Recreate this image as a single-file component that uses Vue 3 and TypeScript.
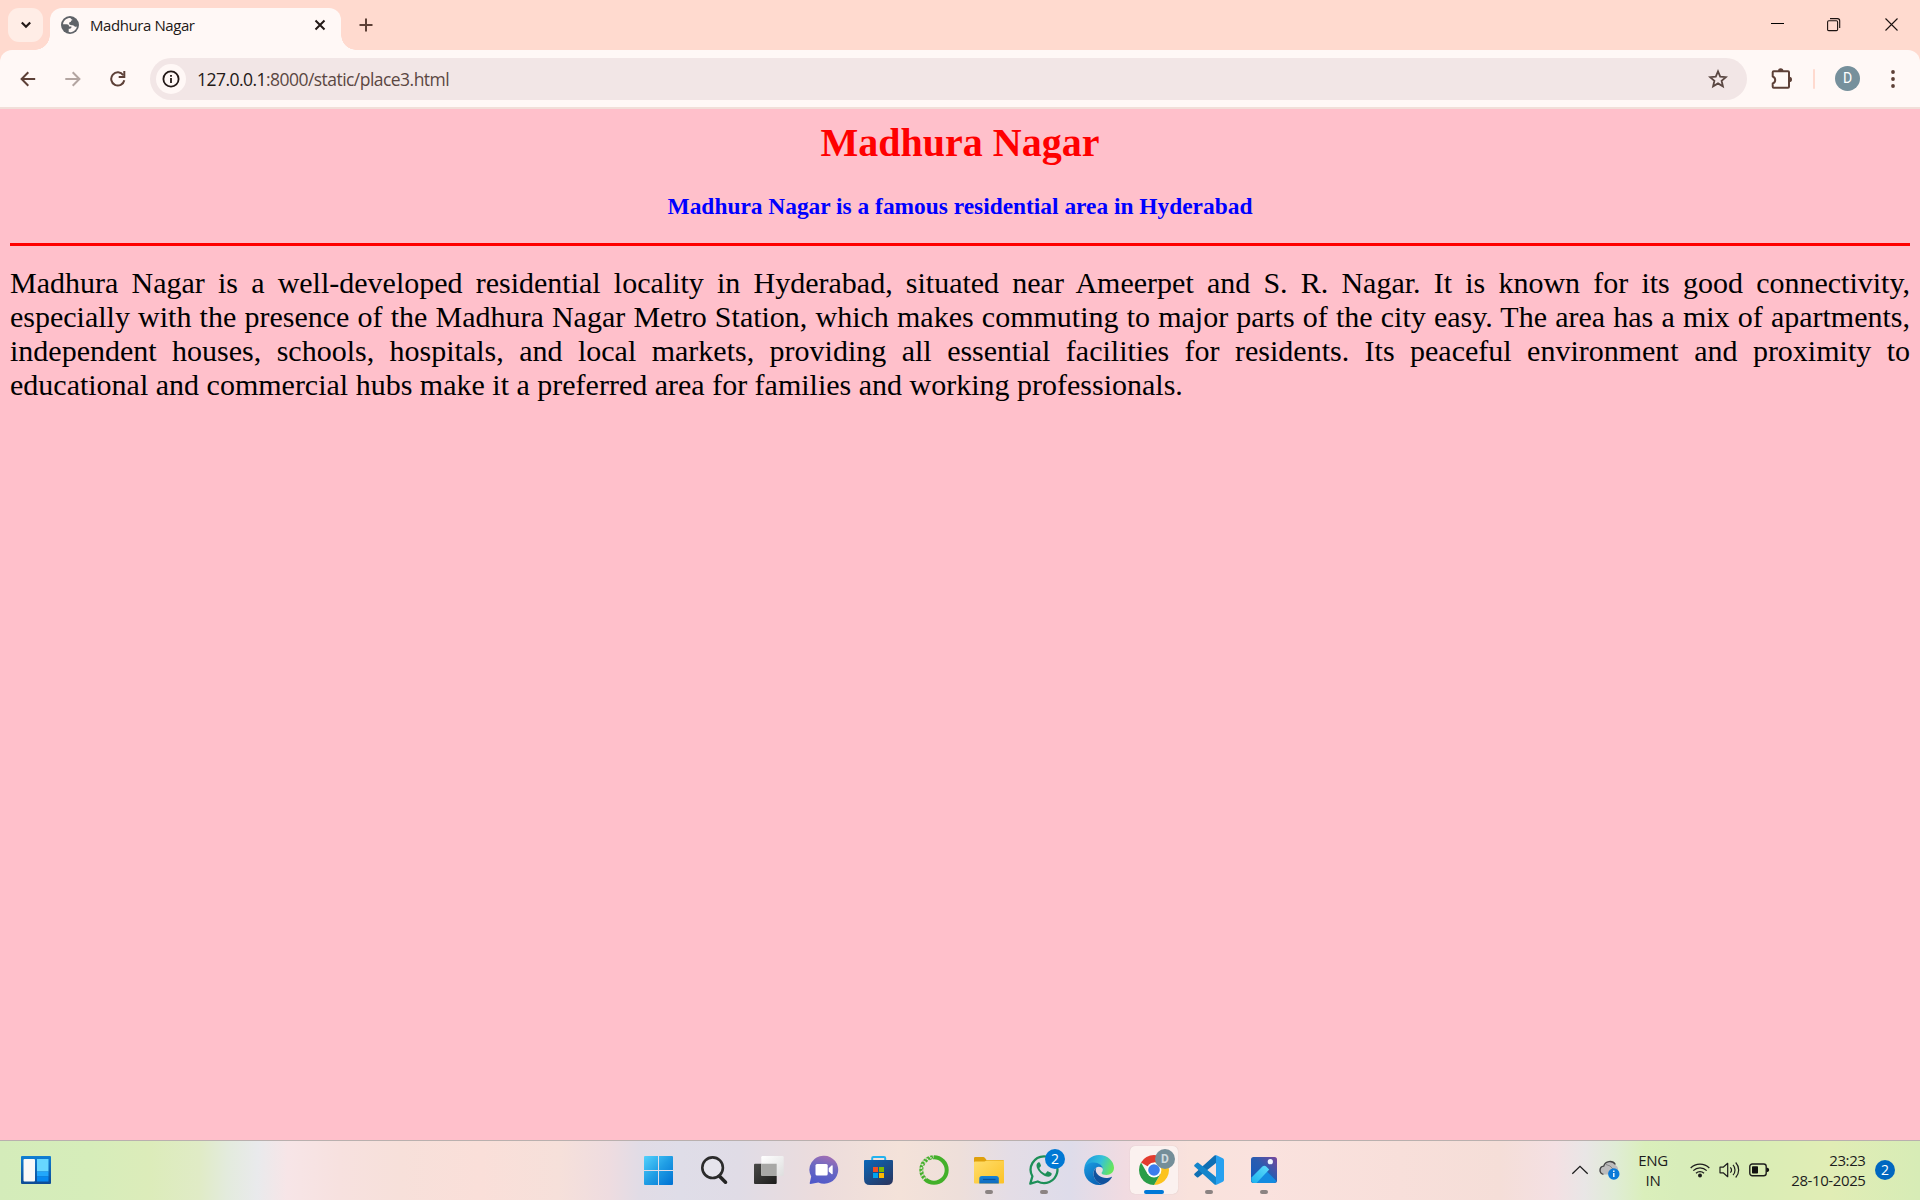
<script setup lang="ts">
interface TaskItem {
  id: string
  state?: 'open' | 'active'
}

const tasks: TaskItem[] = [
  { id: 'start' },
  { id: 'search' },
  { id: 'view' },
  { id: 'chat' },
  { id: 'store' },
  { id: 'anaconda' },
  { id: 'files', state: 'open' },
  { id: 'whatsapp', state: 'open' },
  { id: 'edge' },
  { id: 'chrome', state: 'active' },
  { id: 'code', state: 'open' },
  { id: 'photos', state: 'open' },
]
</script>

<template>
  <div class="screen">
    <header class="tabstrip">
      <button class="tab-search" aria-label="Search tabs">
        <svg width="12" height="8" viewBox="0 0 12 8"><path d="M1.8 1.5 6 5.7l4.200-4.200" fill="none" stroke="#231917" stroke-width="2.200" /></svg>
      </button>
      <div class="tab">
        <svg class="favicon" width="18" height="18" viewBox="0 0 18 18">
          <circle cx="9" cy="9" r="9" fill="#5f6368" />
          <path d="M9.300 1.900c-3.900 0-7 2.700-7.300 6.300h3.600c1.700 0 2.400.9 2.400 2.200h2.400c.3 1.900-.9 2.300-2.700 2.300v3.300c.9.200 2.200.2 3.100-.1 2.600-.8 4.600-2.800 5.200-5.500-.8.700-1.900.6-2.600-.2-.6-.8-1.500-1-2.500-1-1.700 0-2.800-.5-2.800-1.700 0-1 .8-1.600 1.800-1.700.1-1.100.7-1.700 1.800-1.800-.9-.3-1.600-1.100-2.400-2.100z" fill="#fff8f6" />
        </svg>
        <span class="tab-title">Madhura Nagar</span>
        <svg class="tab-close" width="12" height="12" viewBox="0 0 12 12"><path d="m1.500 1.500 9 9m0-9-9 9" stroke="#231917" stroke-width="2" fill="none" /></svg>
      </div>
      <svg class="new-tab" width="14" height="14" viewBox="0 0 14 14"><path d="M7 .5v13M.5 7h13" stroke="#5d4037" stroke-width="2" fill="none" /></svg>
      <div class="window-controls">
        <svg width="14" height="14" viewBox="0 0 14 14"><path d="M0 5.500h13" stroke="#000" stroke-width="1" /></svg>
        <svg class="restore" width="14" height="14" viewBox="0 0 14 14"><path d="M.6 4q0-1.200 1.200-1.200h7.600q1.200 0 1.200 1.200v7.400q0 1.200-1.200 1.200H1.800Q.6 12.600.6 11.400zM3 .6h7.500q2.200 0 2.200 2.200V10" stroke="#1c1210" stroke-width="1.100" fill="none" /></svg>
        <svg width="14" height="14" viewBox="0 0 14 14"><path d="m.5.500 12 12m0-12-12 12" stroke="#1c1210" stroke-width="1.100" /></svg>
      </div>
    </header>

    <div class="toolbar-wrap">
      <nav class="toolbar">
        <div class="nav-buttons">
          <svg width="16" height="16" viewBox="0 0 16 16"><path d="M15.200 8H2M8.300 1.300 1.600 8l6.700 6.700" fill="none" stroke="#5d4037" stroke-width="2" /></svg>
          <svg width="16" height="16" viewBox="0 0 16 16"><path d="M.3 8H14M7.700 1.300 14.400 8l-6.700 6.700" fill="none" stroke="#b3a5a1" stroke-width="2" /></svg>
          <svg width="16" height="16" viewBox="0 0 16 16"><path d="M14.300 9.200A6.600 6.600 0 1 1 13.300 4.200" fill="none" stroke="#5d4037" stroke-width="2" /><path d="M14.300 0v6.100H8.700" fill="none" stroke="#5d4037" stroke-width="2" /></svg>
        </div>
        <div class="address">
          <span class="site-info">
            <svg width="18" height="18" viewBox="0 0 18 18"><circle cx="9" cy="9" r="7.600" fill="none" stroke="#231917" stroke-width="1.800" /><path d="M9 8v5M9 5v1.800" stroke="#231917" stroke-width="1.800" /></svg>
          </span>
          <span class="url"><b>127.0.0.1</b>:8000/static/place3.html</span>
          <svg class="star" width="20" height="20" viewBox="0 0 20 20"><path d="m10 2.400 2.200 5.200 5.700.5-4.300 3.700 1.300 5.500-4.900-2.900-4.900 2.900 1.300-5.500-4.300-3.700 5.700-.5z" fill="none" stroke="#5a4742" stroke-width="1.800" /></svg>
        </div>
        <svg class="puzzle" width="23" height="22" viewBox="0 0 23 22">
          <path d="M3.700 3.300H18q1 0 1 1V18.700q0 1-1 1H3.700q-1 0-1-1V15.500a3.700 3.700 0 0 0 0-7V4.300q0-1 1-1z" fill="none" stroke="#5d4037" stroke-width="2" stroke-linejoin="round" />
          <path d="M8 3a2.700 2.700 0 0 1 5.400 0zM19.300 8.700a2.700 2.700 0 0 1 0 5.400z" fill="#5d4037" />
        </svg>
        <span class="divider"></span>
        <span class="avatar">D</span>
        <svg class="menu" width="4" height="18" viewBox="0 0 4 18"><g fill="#5d4037"><circle cx="2" cy="2" r="1.900" /><circle cx="2" cy="9" r="1.900" /><circle cx="2" cy="16" r="1.900" /></g></svg>
      </nav>
    </div>

    <main class="page">
      <h1>Madhura Nagar</h1>
      <h3>Madhura Nagar is a famous residential area in Hyderabad</h3>
      <hr />
      <p>
        Madhura Nagar is a well-developed residential locality in Hyderabad, situated near Ameerpet and S. R. Nagar. It is known for its good connectivity, especially with the presence of the Madhura Nagar Metro Station, which makes commuting to major parts of the city easy. The area has a mix of apartments, independent houses, schools, hospitals, and local markets, providing all essential facilities for residents. Its peaceful environment and proximity to educational and commercial hubs make it a preferred area for families and working professionals.
      </p>
    </main>

    <footer class="taskbar">
      <svg class="widgets" width="30" height="28" viewBox="0 0 30 28">
        <defs><linearGradient id="wg" x1="0" y1="0" x2="0" y2="1"><stop offset="0" stop-color="#0f7fd4" /><stop offset="1" stop-color="#0c4b96" /></linearGradient></defs>
        <rect width="30" height="28" rx="1" fill="url(#wg)" />
        <rect x="2.500" y="3" width="11.500" height="22.500" rx="1" fill="#f8f8f8" />
        <rect x="16" y="3" width="11.500" height="12.500" fill="#67d6ff" />
        <rect x="16" y="15.500" width="11.500" height="5" fill="#22a7fb" />
        <rect x="16" y="20.500" width="11.500" height="5" fill="#0788ef" />
      </svg>

      <div class="apps">
        <div v-for="t in tasks" :key="t.id" class="app" :class="[t.state, t.id]">
          <svg v-if="t.id === 'start'" width="30" height="30" viewBox="0.5 -0.5 30 30">
            <defs><linearGradient id="st" gradientUnits="userSpaceOnUse" x1="0" y1="0" x2="29" y2="29"><stop offset="0" stop-color="#54d3fd" /><stop offset=".5" stop-color="#219fe5" /><stop offset="1" stop-color="#0072d3" /></linearGradient></defs>
            <path d="M1.500.5H14.500v14H.5v-13q0-1 1-1zM15.500.5h13q1 0 1 1v13H15.500zM.5 15.500H14.500v14H1.500q-1 0-1-1zM15.500 15.500h14v13q0 1-1 1H15.500z" fill="url(#st)" />
          </svg>
          <svg v-else-if="t.id === 'search'" width="30" height="30" viewBox="0 0 30 30">
            <path d="m20.300 21 6.200 6.200" stroke="#242424" stroke-width="3.600" stroke-linecap="round" />
            <circle cx="13.600" cy="12.700" r="10.300" fill="#ebebf2" fill-opacity=".5" stroke="#2b2b2b" stroke-width="2.600" />
          </svg>
          <svg v-else-if="t.id === 'view'" width="30" height="30" viewBox="0 0 30 30">
            <defs><linearGradient id="tv" x1="0" y1="0" x2="1" y2="1"><stop offset="0" stop-color="#4a4a48" /><stop offset="1" stop-color="#1c1c1b" /></linearGradient><linearGradient id="tw" x1="0" y1="0" x2="1" y2="1"><stop offset="0" stop-color="#fff" /><stop offset="1" stop-color="#dedede" /></linearGradient></defs>
            <rect x="0" y="8.700" width="22.700" height="20.300" rx="1" fill="url(#tv)" />
            <rect x="7.300" y="1" width="22.400" height="20" rx="1.200" fill="url(#tw)" />
            <path d="M7.300 8.700h15.400V21H8.300q-1 0-1-1z" fill="#a8a8a6" />
          </svg>
          <svg v-else-if="t.id === 'chat'" width="30" height="30" viewBox="0 0 30 30">
            <defs><linearGradient id="ch" x1=".7" y1="0" x2=".4" y2="1"><stop offset="0" stop-color="#a46fb4" /><stop offset=".45" stop-color="#6a68c2" /><stop offset="1" stop-color="#5059c9" /></linearGradient></defs>
            <path d="M15.300.8a14 14 0 1 1-6 26.700L1.500 29q-1 0-.8-1l1.500-6.500A14 14 0 0 1 15.300.8z" fill="url(#ch)" />
            <rect x="6.500" y="9" width="12.200" height="11.500" rx="1.500" fill="#fff" />
            <path d="M19.700 13.200 22.500 10.500q1.200-.7 1.200.6v7.500q0 1.200-1.200.5l-2.800-2.600z" fill="#fff" />
          </svg>
          <svg v-else-if="t.id === 'store'" width="30" height="30" viewBox="0 0 30 30">
            <defs><linearGradient id="so" x1="0" y1="0" x2=".8" y2="1"><stop offset="0" stop-color="#0967b9" /><stop offset="1" stop-color="#283863" /></linearGradient></defs>
            <path d="M8.200 6V3.100q0-1.200 1.200-1.200h10.600q1.200 0 1.200 1.200V6" fill="none" stroke="#22b2ee" stroke-width="2" />
            <path d="M0 6q0-1 1-1h27q1 0 1 1v18q0 6-6 6h-17q-6 0-6-6z" fill="url(#so)" />
            <path d="M9 12h5v5h-5z" fill="#f25022" /><path d="M15 12h5v5h-5z" fill="#7fba00" /><path d="M9 18h5v5h-5z" fill="#00a4ef" /><path d="M15 18h5v5h-5z" fill="#ffb900" />
          </svg>
          <svg v-else-if="t.id === 'anaconda'" width="30" height="30" viewBox="0 0 30 30">
            <circle cx="15" cy="15" r="12.700" fill="none" stroke="#43b02a" stroke-width="4" />
            <g fill="none" stroke="#ecdfd8" stroke-width="1.300">
              <path d="M15 .9A14.100 14.100 0 0 0 6.300 26.100" stroke-dasharray="1.500 2.400" />
              <path d="M15 2.500A12.500 12.500 0 0 0 7.200 24.800" stroke-dasharray="1.700 1.900" stroke-dashoffset="1.200" />
              <path d="M14 4.100A10.900 10.900 0 0 0 8 23.400" stroke-dasharray="1.800 2.200" stroke-dashoffset=".4" />
            </g>
          </svg>
          <svg v-else-if="t.id === 'files'" width="30" height="30" viewBox="0 0 30 30">
            <defs><linearGradient id="fi" x1="0" y1="0" x2="1" y2="1"><stop offset="0" stop-color="#ffdd6b" /><stop offset="1" stop-color="#fcc226" /></linearGradient><linearGradient id="fj" x1="0" y1="0" x2="0" y2="1"><stop offset="0" stop-color="#1683d8" /><stop offset="1" stop-color="#0f6abd" /></linearGradient></defs>
            <path d="M0 3.200Q0 2 1.200 2h8q1 0 1.800 1l1.500 2h16.200Q30 5 30 6.300V12H0z" fill="#dfa00c" />
            <path d="M0 7.500q0-1 1-1h9.500l2.200-1H30v22.200Q30 28.500 29 28.500H1q-1 0-1-1z" fill="url(#fi)" />
            <path d="M5.300 28.500v-5q0-2.500 2.500-2.500h14.500q2.500 0 2.500 2.500v5z" fill="url(#fj)" /><path d="M9 24.500h12.500" stroke="#0a529b" stroke-width="1.200" />
          </svg>
          <svg v-else-if="t.id === 'whatsapp'" width="30" height="30" viewBox="0 0 30 30">
            <path d="M15.200 1.300A13.400 13.400 0 1 1 8.700 26.500L1.300 28.600 3.400 21.300A13.400 13.400 0 0 1 15.200 1.300z" fill="none" stroke="#1d8f58" stroke-width="2.300" stroke-linejoin="round" />
            <path d="M10 7.300c-.9-.2-2.500 1.300-2.500 3.300 0 2.900 2.600 6.200 5 8.200 2.200 1.800 4.600 2.900 6.800 2.900 2 0 3.400-1.400 3.400-3 0-.5-.2-.8-.7-1l-2.700-1.300c-.6-.3-.9-.1-1.300.3l-1.200 1.500c-.4.400-.7.400-1.200.2-2.200-1-4-2.600-5-4.700-.2-.5-.2-.7.100-1.100l1.100-1.400c.2-.3.200-.6.100-1L11 8q-.3-.7-1-.7z" fill="#1d8f58" />
          </svg>
          <svg v-else-if="t.id === 'edge'" width="30" height="30" viewBox="0 0 30 30">
            <defs>
              <linearGradient id="e1" x1="0" y1=".2" x2="1" y2=".5"><stop offset="0" stop-color="#1a97e0" /><stop offset=".55" stop-color="#35c1d9" /><stop offset="1" stop-color="#68e65a" /></linearGradient>
              <linearGradient id="e2" x1="0" y1="0" x2=".6" y2="1"><stop offset="0" stop-color="#1b9de2" /><stop offset="1" stop-color="#0a63b5" /></linearGradient>
            </defs>
            <path d="M.3 13.500C1 5.500 7.300 0 15 0c8.800 0 15 6.300 15 12.800 0 4.500-3.500 7.200-7.500 7.200-3 0-5-.9-5-2 0-.7 1.300-1.300 1.300-3.600 0-3.200-3-6.200-8-6.200-5.300 0-9 2.700-10.500 5.300z" fill="url(#e1)" />
            <path d="M.1 15C.5 10 5 7.400 9.500 7.400c5.700 0 9.300 3.100 9.300 6.500-.6-1.300-2-2.200-4-2.200-3 0-5.300 3.300-5.300 7 0 5.300 4.200 9.700 9.300 10.800-1.200.4-2.500.5-3.800.5-8.500 0-15-7-14.900-15z" fill="url(#e2)" />
            <path d="M12.600 12.400c-1.700 1.100-3.100 3.500-3.100 6.300 0 5.300 4.200 9.800 9.400 10.800 3.900-1.100 7.100-3.700 8.900-6.900.3-.6-.1-1-.7-.7-1.300.7-3 1.200-5 1.200-5.500 0-10.400-3.900-10.400-8 0-1 .3-2 .9-2.700z" fill="#10529e" />
          </svg>
          <svg v-else-if="t.id === 'chrome'" width="30" height="30" viewBox="0 0 30 30">
            <path d="M15 15 2.010 7.500A15 15 0 0 1 27.990 7.500H15z" fill="#e33b2e" />
            <path d="M15 7.500h12.990A15 15 0 0 1 15 30l6.500-11.250z" fill="#fcc31e" />
            <path d="M2.010 7.500A15 15 0 0 0 15 30l6.500-11.250L8.500 18.750z" fill="#2a9d48" />
            <circle cx="15" cy="15" r="7.400" fill="#fff" /><circle cx="15" cy="15" r="5.800" fill="#3b7ded" />
          </svg>
          <svg v-else-if="t.id === 'code'" width="30" height="30" viewBox="0 0 30 30">
            <path d="M22 .3v7.800L4.300 22.300q-.7.500-1.400 0L.6 20.200q-.9-.9 0-1.700L20.500.6q.7-.6 1.500-.3z" fill="#0f6fb4" />
            <path d="M22 29.700v-7.800L4.300 7.700q-.7-.5-1.400 0L.6 9.800q-.9.900 0 1.700L20.500 29.400q.7.600 1.500.3z" fill="#1485cb" />
            <path d="M21.300 29.700q.6-.3.700-1.200V1.500Q21.900.6 21.300.3q.5-.3 1.200 0l6.300 3q1.200.6 1.200 1.900v19.600q0 1.300-1.200 1.900l-6.300 3q-.7.300-1.200 0z" fill="#27a1f0" />
          </svg>
          <svg v-else width="26" height="26" viewBox="0 0 26 26">
            <defs><linearGradient id="p1" x1="0" y1="1" x2="1" y2="0"><stop offset="0" stop-color="#105bc0" /><stop offset=".55" stop-color="#2b5cb0" /><stop offset="1" stop-color="#7a469b" /></linearGradient><linearGradient id="p2" x1="0" y1="1" x2="1" y2="0"><stop offset="0" stop-color="#1bb3ee" /><stop offset="1" stop-color="#60dcfb" /></linearGradient></defs>
            <rect width="26" height="26" rx="2.500" fill="url(#p1)" />
            <path d="M1 24.500 12 13.300q1.300-1.300 2.600 0L25.500 24q-.8 2-2.500 2H3q-1.600 0-2-1.500z" fill="#148be0" />
            <path d="m.5 20.500 10.900-11q2-1.600 3.800 0l3 3L5.500 26H2.800Q.5 26 .3 23.600z" fill="url(#p2)" />
            <circle cx="19.300" cy="4.700" r="2.600" fill="#eff6ff" />
          </svg>
          <span v-if="t.id === 'whatsapp'" class="badge blue">2</span>
          <span v-if="t.id === 'chrome'" class="badge gray">D</span>
          <i v-if="t.state" class="indicator"></i>
        </div>
      </div>

      <div class="tray">
        <svg class="chevron" width="18" height="10" viewBox="0 0 18 10"><path d="m1.300 8.800 7.700-7.500 7.700 7.500" fill="none" stroke="#1d1d1d" stroke-width="1.300" /></svg>
        <svg class="cloud" width="21" height="20" viewBox="0 0 21 20">
          <path d="M4.200 14.500A4.200 4.200 0 0 1 4.600 6 6.500 6.500 0 0 1 16.500 5a4.500 4.500 0 0 1 2.500 3.500v6z" fill="#bcbcbc" />
          <path d="M4.400 14.300A4.100 4.100 0 0 1 4.700 6.200 6.500 6.500 0 0 1 16.400 4.500" fill="none" stroke="#444" stroke-width="1.300" />
          <path d="M7 4.500q4 .2 8 5.500" fill="none" stroke="#858585" stroke-width="1" />
          <circle cx="14.800" cy="14" r="5.700" fill="#0a7ad8" /><path d="M14.800 13.100v4M14.800 10.500v1.500" stroke="#fff" stroke-width="1.400" />
        </svg>
        <div class="language"><span>ENG</span><span>IN</span></div>
        <svg class="wifi" width="20" height="16" viewBox="0 0 20 16"><g fill="none" stroke="#1d1d1d" stroke-width="1.300"><path d="M.7 6a13 13 0 0 1 18.600 0M3.300 8.600a9.400 9.400 0 0 1 13.400 0M6 11.200a5.800 5.800 0 0 1 8 0" /></g><circle cx="10" cy="13.500" r="2" fill="#1d1d1d" /></svg>
        <svg class="sound" width="21" height="18" viewBox="0 0 21 18"><g fill="none" stroke="#1d1d1d" stroke-width="1.200"><path d="M1 6.200h3.200L8.700 2.300v13.400L4.200 11.800H1z" stroke-linejoin="round" /><path d="M11.300 6.300a4 4 0 0 1 0 5.400M14 3.900a7.500 7.500 0 0 1 0 10.200M16.700 1.500a11 11 0 0 1 0 15" /></g></svg>
        <svg class="battery" width="21" height="14" viewBox="0 0 21 14"><rect x=".8" y="1" width="16.400" height="11.800" rx="2.500" fill="none" stroke="#1d1d1d" stroke-width="1.400" /><rect x="3" y="3.200" width="6" height="7.400" rx=".8" fill="#111" /><path d="M17.500 4.800h1q1.700.6 1.700 2.100T18.500 9h-1z" fill="#111" /></svg>
        <div class="clock"><span>23:23</span><span>28-10-2025</span></div>
        <span class="notices">2</span>
      </div>
    </footer>
  </div>
</template>

<style>
body {
  overflow: hidden;
}
</style>

<style scoped>
.screen {
  width: 1920px;
  height: 1200px;
  display: flex;
  flex-direction: column;
  overflow: hidden;
  background: #ffdacf;
  font-family: "Open Sans", "Noto Sans", sans-serif;
}
svg {
  display: block;
  flex: none;
}
.tabstrip {
  height: 50px;
  flex: none;
  display: flex;
  align-items: flex-start;
  padding-left: 8px;
}
.tab-search {
  width: 35px;
  height: 34px;
  margin: 8px 7px 0 0;
  padding: 0;
  border: 0;
  border-radius: 11px;
  background: #ffede6;
  display: flex;
  align-items: center;
  justify-content: center;
}
.tab {
  position: relative;
  width: 291px;
  height: 42px;
  margin-top: 8px;
  box-sizing: border-box;
  padding: 0 15px 8px 11px;
  border-radius: 12px 12px 0 0;
  background: #fff8f6;
  display: flex;
  align-items: center;
}
.tab::before,
.tab::after {
  content: "";
  position: absolute;
  bottom: 0;
  width: 15px;
  height: 15px;
}
.tab::before {
  right: 100%;
  background: radial-gradient(circle at 0 0, transparent 14.500px, #fff8f6 15px);
}
.tab::after {
  left: 100%;
  background: radial-gradient(circle at 100% 0, transparent 14.500px, #fff8f6 15px);
}
.tab-title {
  margin-left: 11px;
  font-size: 15px;
  letter-spacing: -0.42px;
  color: #231917;
  white-space: nowrap;
}
.tab-close {
  margin-left: auto;
}
.new-tab {
  margin: 18px 0 0 18px;
}
.window-controls {
  margin: 18px 21px 0 auto;
  display: flex;
  gap: 43px;
}
.restore {
  margin: 0 1px 0 -1px;
}
.toolbar-wrap {
  flex: none;
  height: 59px;
}
.toolbar {
  height: 57px;
  border-bottom: 2px solid #f1dfd9;
  border-radius: 12px 12px 0 0;
  background: #fff8f6;
  display: flex;
  align-items: center;
  padding-left: 20px;
}
.nav-buttons {
  width: 130px;
  display: flex;
  gap: 29px;
}
.address {
  width: 1597px;
  height: 42px;
  box-sizing: border-box;
  padding: 0 19px 0 6px;
  margin-top: 1px;
  border-radius: 21px;
  background: #f2e6e6;
  display: flex;
  align-items: center;
}
.site-info {
  width: 30px;
  height: 30px;
  border-radius: 50%;
  background: #fff8f6;
  display: flex;
  align-items: center;
  justify-content: center;
}
.url {
  margin-left: 11px;
  font-size: 17.500px;
  letter-spacing: -0.54px;
  color: #5b4742;
  white-space: nowrap;
}
.url b {
  font-weight: 400;
  color: #231917;
}
.star {
  margin-left: auto;
}
.puzzle {
  margin-left: 23px;
}
.divider {
  width: 2px;
  height: 20px;
  margin-left: 20px;
  border-radius: 1px;
  background: #ffdacf;
}
.avatar {
  width: 25px;
  height: 25px;
  margin-left: 20px;
  border-radius: 50%;
  background: #76909c;
  color: #fff;
  font: 14px/25px Roboto, sans-serif;
  text-align: center;
}
.menu {
  margin-left: 30.500px;
}
.page {
  flex: 1;
  padding: 11px 10px 0;
  background: #ffc0cb;
  font-family: "Liberation Serif", "Times New Roman", serif;
  color: #000;
}
h1 {
  margin: 0;
  font-size: 40px;
  line-height: 46px;
  text-align: center;
  color: #f00;
}
h3 {
  margin: 26px 0 23px;
  font-size: 23.400px;
  line-height: 28px;
  text-align: center;
  color: #00f;
}
hr {
  height: 3px;
  margin: 0 0 20px;
  border: 0;
  background: #f00;
}
p {
  margin: 0;
  font-size: 30px;
  line-height: 34px;
  text-align: justify;
}
.taskbar {
  position: relative;
  flex: none;
  height: 58px;
  padding-bottom: 1px;
  border-top: 1px solid #b9b0ae;
  display: flex;
  align-items: center;
  background: linear-gradient(91deg, #d4ecba 0, #d6edba 90px, #dcecba 150px, #e0ebc6 200px, #e3ebdd 228px, #e9eaec 258px, #f7e5e7 288px, #f7e1df 340px, #f7e0da 400px, #fadfd9 480px, #f6e0da 560px, #eedce0 610px, #e1dce6 640px, #dfdde8 680px, #e0dce6 740px, #ecdcdc 820px, #f4e2d9 900px, #eedfda 960px, #e4dde6 1010px, #dedcea 1070px, #f1dbe1 1125px, #f9e2dc 1190px, #fae2de 1260px, #f8dfda 1400px, #f5ded8 1500px, #f4e0e3 1555px, #e9e6e6 1585px, #e0ecd6 1615px, #daefbb 1645px, #d8edba 1680px, #d9edb5 1750px, #e1edb5 1830px, #d7ecb6 1920px);
}
.widgets {
  margin: 0 580.500px 0 21px;
}
.apps {
  display: flex;
}
.app {
  position: relative;
  width: 48px;
  height: 48px;
  margin: 0 3.500px;
  display: flex;
  align-items: center;
  justify-content: center;
}
.app.active {
  border-radius: 5px;
  background: #fbf1ef;
  box-shadow: 0 0 1px #cdb9b5;
}
.indicator {
  position: absolute;
  left: 20px;
  bottom: 0;
  width: 8px;
  height: 4px;
  border-radius: 2px;
  background: #8b8382;
}
.active .indicator {
  left: 14px;
  width: 20px;
  background: #0078d7;
}
.badge {
  position: absolute;
  top: 3px;
  right: 3px;
  width: 20px;
  height: 20px;
  border-radius: 50%;
  text-align: center;
  color: #fff;
}
.badge.blue {
  background: #0078d4;
  font-size: 14px;
  line-height: 20px;
}
.badge.gray {
  background: #748e99;
  color: #cfdadf;
  font: 700 12px/20px Roboto, sans-serif;
}
.tray {
  margin-left: auto;
  padding-right: 25px;
  display: flex;
  align-items: center;
  font-size: 15px;
  line-height: 20px;
  color: #1d1d1d;
}
.cloud {
  margin-left: 10px;
}
.language {
  width: 36px;
  margin-left: 15px;
  display: flex;
  flex-direction: column;
  align-items: center;
  letter-spacing: -0.3px;
}
.wifi {
  margin-left: 19px;
}
.sound {
  margin-left: 9px;
}
.battery {
  margin-left: 9px;
}
.clock {
  width: 80px;
  margin-left: 15px;
  display: flex;
  flex-direction: column;
  align-items: flex-end;
  letter-spacing: -0.4px;
  white-space: nowrap;
}
.clock span {
  margin-right: -0.5px;
}
.notices {
  width: 20px;
  height: 20px;
  margin-left: 10px;
  border-radius: 50%;
  background: #0067c0;
  color: #fff;
  font-size: 14px;
  line-height: 20px;
  text-align: center;
}
</style>
